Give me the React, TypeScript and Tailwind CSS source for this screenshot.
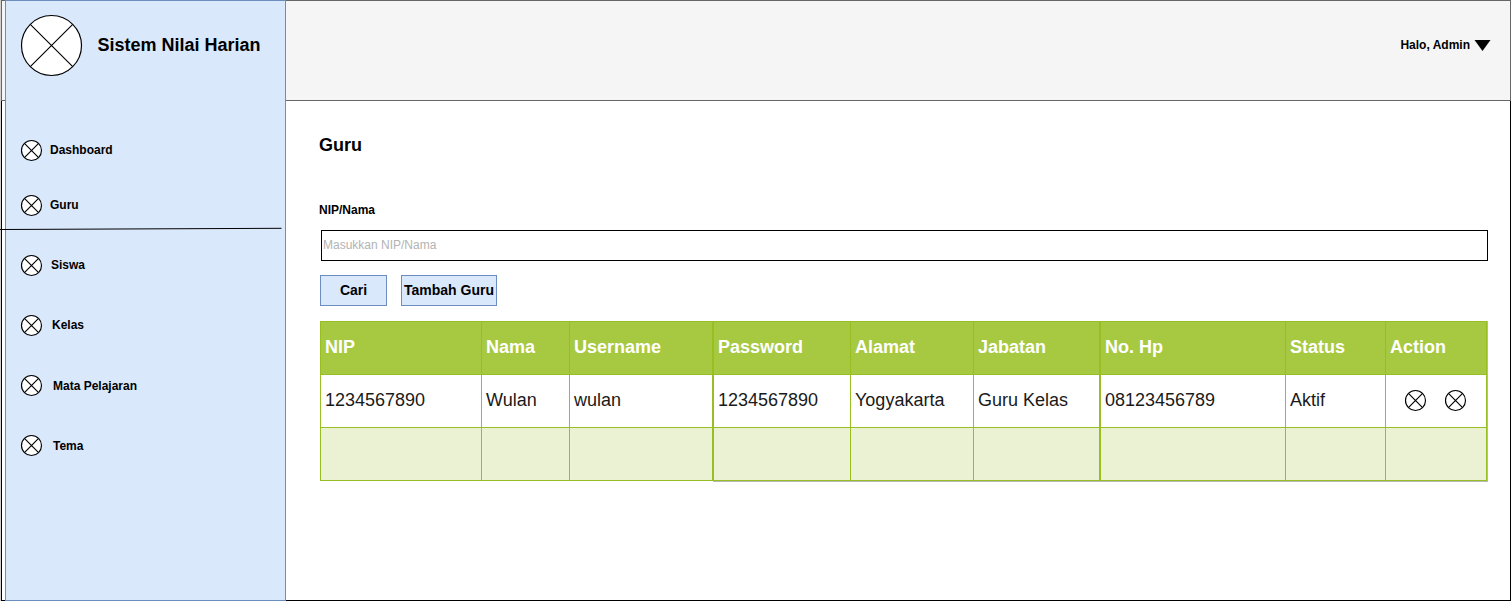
import React from "react";

function CrossCircle({ size, className = "" }: { size: number; className?: string }) {
  const c = size / 2;
  const r = c - 0.5;
  const d = r * Math.SQRT1_2;
  return (
    <svg width={size} height={size} viewBox={`0 0 ${size} ${size}`} className={`block shrink-0 overflow-visible ${className}`} stroke="black" strokeWidth="1.15">
      <circle cx={c} cy={c} r={r} fill="white" />
      <path d={`M${c - d} ${c - d}L${c + d} ${c + d}M${c + d} ${c - d}L${c - d} ${c + d}`} fill="none" />
    </svg>
  );
}

const menu = [
  { label: "Dashboard", row: "mt-[64px]", text: "ml-2 mt-[3px]" },
  { label: "Guru", row: "mt-[34px]", text: "ml-2 mt-[3px]" },
  { label: "Siswa", row: "mt-[39px]", text: "ml-[9px] mt-[3px]" },
  { label: "Kelas", row: "mt-[39px]", text: "ml-[10px] mt-[3px]" },
  { label: "Mata Pelajaran", row: "mt-[39px]", text: "ml-[11px] mt-1" },
  { label: "Tema", row: "mt-[39px]", text: "ml-[11px] mt-1" },
];

const columns = [
  { title: "NIP", value: "1234567890", edge: "border-l" },
  { title: "Nama", value: "Wulan", edge: "border-l" },
  { title: "Username", value: "wulan", edge: "border-l" },
  { title: "Password", value: "1234567890", edge: "border-l-2" },
  { title: "Alamat", value: "Yogyakarta", edge: "border-l" },
  { title: "Jabatan", value: "Guru Kelas", edge: "border-l" },
  { title: "No. Hp", value: "08123456789", edge: "border-l-2" },
  { title: "Status", value: "Aktif", edge: "border-l" },
  { title: "Action", value: "", edge: "border-l" },
];

const rowGrid = "grid grid-cols-[161px_88px_143px_138px_123px_126px_186px_100px_101px] h-[53px] border-t border-[#98bf21]";

function Sidebar() {
  return (
    <aside className="w-[281px] shrink-0 border border-[#6c8ebf] bg-[#dae8fc] pl-[15px] pt-[14px]">
      <div className="flex">
        <CrossCircle size={61} />
        <h1 className="ml-[15.5px] mt-[19px] whitespace-nowrap text-[18px] leading-[22px] font-bold">Sistem Nilai Harian</h1>
      </div>
      <nav>
        {menu.map((m) => (
          <div key={m.label} className={`flex h-[21px] items-start ${m.row}`}>
            <CrossCircle size={21} />
            <span className={`text-[12px] leading-[14px] font-bold ${m.text}`}>{m.label}</span>
          </div>
        ))}
      </nav>
    </aside>
  );
}

function TeacherTable() {
  return (
    <div className="mt-[15px] ml-[34px] w-[1168px] text-[18px] leading-[22px]">
      <div className="flex">
        <div className="w-[1167px] border-r border-b border-[#98bf21]">
          <div className={`${rowGrid} bg-[#a7c942] font-bold text-white`}>
            {columns.map((c) => (
              <div key={c.title} className={`${c.edge} flex items-center border-[#98bf21] pl-1 pb-[3px]`}>{c.title}</div>
            ))}
          </div>
          <div className={`${rowGrid} bg-white text-[#1a1a1a]`}>
            {columns.map((c) => (
              <div key={c.title} className={`${c.edge} flex items-center border-[#98bf21] pl-1 pb-[3px]`}>
                {c.value || (
                  <div className="flex gap-[19px] pl-[15px] pt-0.5">
                    <CrossCircle size={21} />
                    <CrossCircle size={21} />
                  </div>
                )}
              </div>
            ))}
          </div>
          <div className={`${rowGrid} bg-[#eaf2d3]`}>
            {columns.map((c) => (
              <div key={c.title} className={`${c.edge} border-[#98bf21]`} />
            ))}
          </div>
        </div>
        <div className="w-px bg-[#b8b8b8]" />
      </div>
      <div className="ml-[393px] h-px bg-[#b8b8b8]" />
    </div>
  );
}

export default function App() {
  return (
    <div className="relative flex h-[601px] w-[1511px] overflow-hidden bg-white font-['Liberation_Sans',Arial,sans-serif] text-black">
      <div className="w-px bg-[#d0d0d0]" />
      <div className="flex w-1 flex-col">
        <div className="h-[101px] border-y border-l border-[#666666] bg-[#f5f5f5]" />
        <div className="flex-1 border-b border-l border-black" />
      </div>
      <Sidebar />
      <div className="flex flex-1 flex-col">
        <header className="flex h-[101px] items-center justify-end border-y border-r border-[#666666] bg-[#f5f5f5] pr-[19px] pb-[11px]">
          <span className="text-[12px] leading-[14px] font-bold">Halo, Admin</span>
          <svg width="17" height="11" viewBox="0 0 17 11" className="ml-1 mt-px"><path d="M0.5 0H16.5L8.5 11Z" /></svg>
        </header>
        <main className="flex-1 border-r border-b border-black">
          <h2 className="ml-[33px] mt-[33px] text-[18px] leading-[22px] font-bold">Guru</h2>
          <label className="mt-[47px] ml-[33px] block text-[12px] leading-[14px] font-bold">NIP/Nama</label>
          <div className="mt-[13px] ml-[35px] flex h-[31px] w-[1167px] items-center border border-black pl-px pb-px text-[12px] leading-[14px] text-[#b3b3b3]">
            Masukkan NIP/Nama
          </div>
          <div className="mt-[14px] ml-[34px] flex gap-[14px] text-[14px] leading-4 font-bold">
            <button className="h-[31px] w-[67px] border border-[#6c8ebf] bg-[#dae8fc] pb-px">Cari</button>
            <button className="h-[31px] w-[96px] whitespace-nowrap border border-[#6c8ebf] bg-[#dae8fc] pb-px">Tambah Guru</button>
          </div>
          <TeacherTable />
        </main>
      </div>
      <svg className="absolute left-0 top-[226px]" width="282" height="6" viewBox="0 0 282 6"><path d="M0 3.5L281.500 2.300" stroke="black" /></svg>
    </div>
  );
}
